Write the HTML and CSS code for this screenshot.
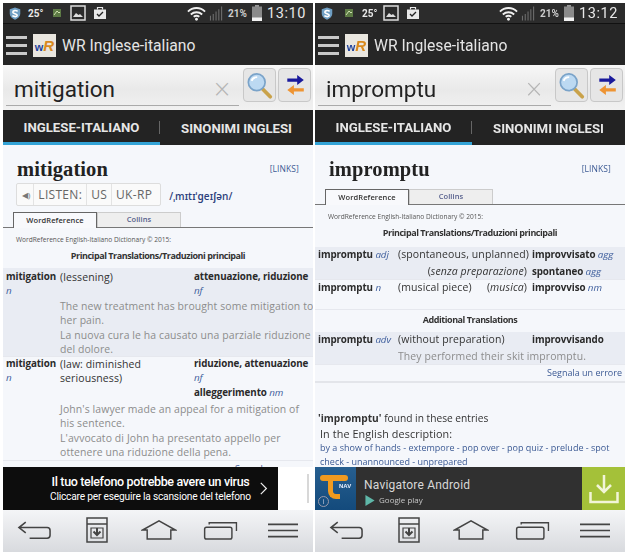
FILE: index.html
```html
<!DOCTYPE html>
<html lang="en">
<head>
    <meta charset="UTF-8">
    <meta name="viewport" content="width=device-width, initial-scale=1.0">
    <title>WR Inglese-italiano</title>
    <link rel="stylesheet" href="styles.css">
</head>
<body>
    <svg class="defs" width="0" height="0">
        <symbol id="i-shield" viewBox="0 0 16 16"><path d="M8 1l6 2v5c0 3.5-3 6-6 7-3-1-6-3.5-6-7V3z" fill="#6f9fc4"/><path d="M11 5.500C9 4 5.500 4.500 5.500 6.500S10.500 8 10.500 10 7 12 5 10.500" fill="none" stroke="#fff" stroke-width="1.8"/></symbol>
        <symbol id="i-photo" viewBox="0 0 16 16"><rect x="1" y="1" width="14" height="14" fill="#2b2b2b" stroke="#ddd" stroke-width="1.5"/><path d="M3 12l3-4 2.5 2 1.500-1 3 3z" fill="#ddd"/></symbol>
        <symbol id="i-bag" viewBox="0 0 14 14"><rect x="1" y="3.5" width="12" height="9.5" fill="#e8e8e8"/><path d="M4.5 3.5V1.500h5v2" fill="none" stroke="#e8e8e8" stroke-width="1.2"/><path d="M4 8l2 2 4-4" fill="none" stroke="#222" stroke-width="1.3"/></symbol>
        <symbol id="i-leaf" viewBox="0 0 10 10"><rect x="1" y="1" width="8" height="8" fill="#5d7a45"/><path d="M2 7l3-4 2 2 1-1" stroke="#cfe0b0" fill="none"/></symbol>
        <symbol id="i-wifi" viewBox="0 0 20 15"><g fill="none" stroke="#f0f0f0" stroke-width="2"><path d="M1 5.500c5-5 13-5 18 0"/><path d="M4 8.500c3.500-3 8.500-3 12 0"/><path d="M7 11c2-1.500 4-1.500 6 0"/></g><circle cx="10" cy="13.5" r="1.5" fill="#f0f0f0"/></symbol>
        <symbol id="i-signal" viewBox="0 0 16 16"><path d="M1 11h1v5H1zM4 9h1v7H4zM7 6.500h1V16H7zM10 4h1v12h-1zM13 1h1v15h-1z" fill="#777"/></symbol>
        <symbol id="i-batt" viewBox="0 0 10 16"><rect x="3" y="0" width="4" height="2" fill="#999"/><rect x="0" y="1.5" width="10" height="14.5" fill="#8a8a8a"/><rect x="0" y="12.5" width="10" height="3.5" fill="#f2f2f2"/></symbol>
        <symbol id="i-search" viewBox="0 0 30 30"><path d="M17 18l9 9" stroke="#c9a24a" stroke-width="4" stroke-linecap="round"/><circle cx="11.5" cy="11.5" r="9" fill="#bcd9f2" stroke="#7aa3c9" stroke-width="1.8"/><path d="M6 10c1-3 3-4 6-4" stroke="#fff" stroke-width="2" fill="none"/></symbol>
        <symbol id="i-swap" viewBox="0 0 20 20"><path d="M3 4h9V1l6 4.500-6 4.500V7H3z" fill="#1a1a9c"/><path d="M18 13H9v-3l-6 4.500L9 19v-3h9z" fill="#ee9433"/></symbol>
        <symbol id="i-back" viewBox="0 0 36 20"><path d="M9 2L2 7.500 9 13M2 7.500h29c2 0 3 1 3 3v5c0 2-1 3-3 3H13" fill="none" stroke="#444" stroke-width="1.6"/></symbol>
        <symbol id="i-save" viewBox="0 0 22 26"><path d="M1 1h20v24H1zM1 7h20" fill="none" stroke="#444" stroke-width="1.5"/><path d="M5 11h12v10H5z" fill="none" stroke="#444" stroke-width="1.2"/><path d="M11 11v7M7.500 14.500L11 18l3.500-3.500" fill="none" stroke="#444" stroke-width="2"/></symbol>
        <symbol id="i-home" viewBox="0 0 38 22"><path d="M1 11L19 1l18 10h-5v10H6V11z" fill="none" stroke="#444" stroke-width="1.6"/></symbol>
        <symbol id="i-recent" viewBox="0 0 38 22"><path d="M1 10c0-1 1-2 2-2h26c1 0 2 1 2 2v9c0 1-1 2-2 2H3c-1 0-2-1-2-2z" fill="none" stroke="#444" stroke-width="1.6"/><path d="M6 5V3h30v9" fill="none" stroke="#444" stroke-width="1.5"/></symbol>
        <symbol id="i-menu" viewBox="0 0 32 16"><path d="M0 1.500h32M0 8h32M0 14.500h32" stroke="#444" stroke-width="1.8"/></symbol>
    </svg>

    <main class="screens">
        <section class="phone">
            <div class="statusbar">
                <svg class="ic-shield"><use href="#i-shield"/></svg>
                <span class="temp">25°</span>
                <svg class="ic-leaf"><use href="#i-leaf"/></svg>
                <svg class="ic-photo"><use href="#i-photo"/></svg>
                <svg class="ic-bag"><use href="#i-bag"/></svg>
                <span class="spacer"></span>
                <svg class="ic-wifi"><use href="#i-wifi"/></svg>
                <svg class="ic-signal"><use href="#i-signal"/></svg>
                <span class="pct">21%</span>
                <svg class="ic-batt"><use href="#i-batt"/></svg>
                <span class="clock">13:10</span>
            </div>
            <div class="appbar">
                <div class="burger"><i></i><i></i><i></i></div>
                <div class="logo"><span class="logo-w">w</span><span class="logo-r">R</span></div>
                <span class="apptitle">WR Inglese-italiano</span>
            </div>
            <div class="searchbar">
                <div class="searchfield">
                    <span class="query">mitigation</span>
                    <span class="clear">×</span>
                </div>
                <button class="sbtn"><svg class="ic-search"><use href="#i-search"/></svg></button>
                <button class="sbtn"><svg class="ic-swap"><use href="#i-swap"/></svg></button>
            </div>
            <div class="tabs">
                <div class="tab active">INGLESE-ITALIANO</div>
                <div class="tab">SINONIMI INGLESI</div>
            </div>
            <div class="content">
                <div class="head">
                    <h1>mitigation</h1>
                    <a class="links">[LINKS]</a>
                </div>
                <div class="listen-row">
                    <div class="listen">
                        <span class="spk">◀︎)</span>
                        <span>LISTEN:</span>
                        <span>US</span>
                        <span>UK-RP</span>
                    </div>
                    <span class="ipa">/ˌmɪtɪˈɡeɪʃən/</span>
                </div>
                <div class="dict-tabs">
                    <span class="dtab on">WordReference</span>
                    <span class="dtab">Collins</span>
                </div>
                <p class="copy">WordReference English-Italiano Dictionary © 2015:</p>
                <h3 class="section">Principal Translations/Traduzioni principali</h3>
                <div class="entry shade">
                    <b>mitigation<br><em>n</em></b>
                    <span>(lessening)</span>
                    <b>attenuazione, riduzione<br><em>nf</em></b>
                    <p class="ex">The new treatment has brought some mitigation to<br>her pain.</p>
                    <p class="ex">La nuova cura le ha causato una parziale riduzione<br>del dolore.</p>
                </div>
                <div class="entry">
                    <b>mitigation<br><em>n</em></b>
                    <span>(law: diminished<br>seriousness)</span>
                    <b>riduzione, attenuazione<br><em>nf</em></b>
                    <b class="wide">alleggerimento <em>nm</em></b>
                    <p class="ex">John's lawyer made an appeal for a mitigation of<br>his sentence.</p>
                    <p class="ex">L'avvocato di John ha presentato appello per<br>ottenere una riduzione della pena.</p>
                </div>
                <div class="report">Segnala un errore</div>
            </div>
            <div class="ad ad-virus">
                <div class="virus">
                    <div class="virus-text">
                        <strong>Il tuo telefono potrebbe avere un virus</strong>
                        <small>Cliccare per eseguire la scansione del telefono</small>
                    </div>
                    <svg class="chev" viewBox="0 0 10 16"><path d="M1 1l7 7-7 7" fill="none" stroke="#eee" stroke-width="1.5"/></svg>
                </div>
                <div class="ad-gap"><i></i></div>
            </div>
            <div class="navbar">
                <svg class="n-back"><use href="#i-back"/></svg>
                <svg class="n-save"><use href="#i-save"/></svg>
                <svg class="n-home"><use href="#i-home"/></svg>
                <svg class="n-recent"><use href="#i-recent"/></svg>
                <svg class="n-menu"><use href="#i-menu"/></svg>
            </div>
        </section>

        <section class="phone">
            <div class="statusbar">
                <svg class="ic-shield"><use href="#i-shield"/></svg>
                <svg class="ic-leaf lead"><use href="#i-leaf"/></svg>
                <span class="temp alt">25°</span>
                <svg class="ic-photo"><use href="#i-photo"/></svg>
                <svg class="ic-bag"><use href="#i-bag"/></svg>
                <span class="spacer"></span>
                <svg class="ic-wifi"><use href="#i-wifi"/></svg>
                <svg class="ic-signal"><use href="#i-signal"/></svg>
                <span class="pct">21%</span>
                <svg class="ic-batt"><use href="#i-batt"/></svg>
                <span class="clock">13:12</span>
            </div>
            <div class="appbar">
                <div class="burger"><i></i><i></i><i></i></div>
                <div class="logo"><span class="logo-w">w</span><span class="logo-r">R</span></div>
                <span class="apptitle">WR Inglese-italiano</span>
            </div>
            <div class="searchbar">
                <div class="searchfield">
                    <span class="query">impromptu</span>
                    <span class="clear">×</span>
                </div>
                <button class="sbtn"><svg class="ic-search"><use href="#i-search"/></svg></button>
                <button class="sbtn"><svg class="ic-swap"><use href="#i-swap"/></svg></button>
            </div>
            <div class="tabs">
                <div class="tab active">INGLESE-ITALIANO</div>
                <div class="tab">SINONIMI INGLESI</div>
            </div>
            <div class="content">
                <div class="head">
                    <h1>impromptu</h1>
                    <a class="links">[LINKS]</a>
                </div>
                <div class="dict-tabs">
                    <span class="dtab on">WordReference</span>
                    <span class="dtab">Collins</span>
                </div>
                <p class="copy">WordReference English-Italiano Dictionary © 2015:</p>
                <h3 class="section roomy">Principal Translations/Traduzioni principali</h3>
                <div class="entry two shade">
                    <b>impromptu <em>adj</em></b>
                    <span>(spontaneous, unplanned)</span>
                    <b>improvvisato <em>agg</em></b>
                    <span class="second">(<i>senza preparazione</i>)</span>
                    <b>spontaneo <em>agg</em></b>
                </div>
                <div class="entry two tall">
                    <b>impromptu <em>n</em></b>
                    <span class="split"><span>(musical piece)</span><span>(<i>musica</i>)</span></span>
                    <b>improvviso <em>nm</em></b>
                </div>
                <h3 class="section add">Additional Translations</h3>
                <div class="entry two shade">
                    <b>impromptu <em>adv</em></b>
                    <span>(without preparation)</span>
                    <b>improvvisando</b>
                    <p class="ex">They performed their skit impromptu.</p>
                </div>
                <div class="report ruled">Segnala un errore</div>
                <p class="found"><b>'impromptu'</b> found in these entries</p>
                <p class="desc">In the English description:</p>
                <p class="refs"><a>by a show of hands</a> - <a>extempore</a> - <a>pop over</a> - <a>pop quiz</a> - <a>prelude</a> - <a>spot</a><br><a>check</a> - <a>unannounced</a> - <a>unprepared</a></p>
            </div>
            <div class="ad ad-nav">
                <div class="nav-icon">
                    <span class="nav-tag">NAV</span>
                    <span class="nav-info">i</span>
                </div>
                <div class="nav-text">
                    <span class="nav-name">Navigatore Android</span>
                    <span class="nav-play"><svg class="ic-play" viewBox="0 0 10 12"><path d="M0 0l10 6-10 6z" fill="#5fb7a8"/></svg>Google play</span>
                </div>
                <div class="nav-dl">
                    <svg viewBox="0 0 30 30"><path d="M15 1v17M8 11l7 7 7-7M1.500 18v10h27V18" fill="none" stroke="#f2f5d8" stroke-width="2.5"/></svg>
                </div>
            </div>
            <div class="navbar">
                <svg class="n-back"><use href="#i-back"/></svg>
                <svg class="n-save"><use href="#i-save"/></svg>
                <svg class="n-home"><use href="#i-home"/></svg>
                <svg class="n-recent"><use href="#i-recent"/></svg>
                <svg class="n-menu"><use href="#i-menu"/></svg>
            </div>
        </section>
    </main>
</body>
</html>
```

FILE: styles.css
```css
body {
    margin: 0;
    background: #fff;
    font-family: "Open Sans", "Noto Sans", sans-serif;
    overflow: hidden;
}

.defs {
    display: block;
    height: 0;
}

.screens {
    display: flex;
    gap: 2px;
    padding: 3px 0 0 3px;
    filter: blur(0.3px);
}

.phone {
    width: 310px;
    height: 549px;
    display: flex;
    flex-direction: column;
    background: #f5f7fb;
    overflow: hidden;
}

/* status bar */
.statusbar {
    height: 20px;
    flex: none;
    display: flex;
    align-items: center;
    padding: 0 7px 0 5px;
    background: #2c2c2c;
    color: #e8e8e8;
    font-family: "Roboto", sans-serif;
}

.spacer { flex: 1; }
.temp { font-size: 10px; font-weight: 700; margin: 0 9px 0 6px; }
.temp.alt { margin: 0 6px 0 0; }
.pct { font-size: 10px; font-weight: 700; margin: 0 5px 0 4px; color: #ccc; }
.clock { font-size: 14.5px; letter-spacing: 0.6px; margin-left: 5px; }
.ic-shield { width: 14px; height: 15px; }
.ic-leaf { width: 10px; height: 10px; margin-right: 8px; }
.ic-leaf.lead { margin-left: 10px; }
.ic-photo { width: 16px; height: 16px; margin-right: 7px; }
.ic-bag { width: 14px; height: 14px; }
.ic-wifi { width: 19px; height: 15px; }
.ic-signal { width: 15px; height: 16px; margin-left: 3px; }
.ic-batt { width: 10px; height: 16px; }

/* app bar */
.appbar {
    height: 42px;
    flex: none;
    display: flex;
    align-items: center;
    padding: 2px 3px 0;
    background: #262626;
    border-top: 1px solid #111;
    box-sizing: border-box;
}

.burger {
    width: 21px;
    display: flex;
    flex-direction: column;
    gap: 5px;
    margin-right: 6px;
}

.burger i {
    display: block;
    height: 3px;
    background: #c9c9c9;
}

.logo {
    width: 23px;
    height: 23px;
    display: flex;
    align-items: center;
    justify-content: center;
    background: #e9e6df;
    font-family: "Liberation Sans", sans-serif;
    font-weight: 700;
    margin-right: 6px;
}

.logo-w { color: #1d3f9a; font-size: 11px; margin-top: 2px; }
.logo-r { color: #d98a1e; font-size: 15px; font-style: italic; }

.apptitle {
    color: #e4e4e4;
    font-family: "Roboto", sans-serif;
    font-size: 15.7px;
}

/* search */
.searchbar {
    height: 45px;
    flex: none;
    display: flex;
    align-items: flex-start;
    gap: 2px;
    padding: 3px 2px 0 3px;
    box-sizing: border-box;
    background: linear-gradient(#f7f7f7, #e9e9e9 55%, #f1f1f1);
}

.searchfield {
    flex: 1;
    height: 38px;
    display: flex;
    align-items: center;
    justify-content: space-between;
    padding: 5px 7px 0 8px;
    margin-right: 2px;
    border-bottom: 1.5px solid #aaa;
    box-sizing: border-box;
}

.query {
    font-family: "Roboto", sans-serif;
    font-size: 22.5px;
    color: #222;
}

.clear {
    font-family: "DejaVu Sans", sans-serif;
    font-size: 24px;
    font-weight: 300;
    color: #b5b5b5;
}

.sbtn {
    width: 33px;
    height: 34px;
    padding: 0;
    display: flex;
    align-items: center;
    justify-content: center;
    background: #e6e6e6;
    border: 1px solid #c8c8c8;
    border-radius: 4px;
}

.ic-search { width: 28px; height: 29px; }
.ic-swap { width: 22px; height: 22px; }

/* tabs */
.tabs {
    height: 35px;
    flex: none;
    display: flex;
    background: #232323;
    box-sizing: border-box;
}

.tab {
    flex: 1;
    position: relative;
    display: flex;
    align-items: center;
    justify-content: center;
    color: #e6e6e6;
    font-family: "Roboto", sans-serif;
    font-weight: 700;
    font-size: 13.2px;
    box-sizing: border-box;
    padding-top: 2px;
}

.tab.active {
    flex: none;
    width: 157px;
    padding-top: 3px;
    border-bottom: 3px solid #33a3d6;
}

.tab.active::after {
    content: "";
    position: absolute;
    right: 0;
    top: 11px;
    width: 1px;
    height: 13px;
    background: #666;
}

/* page content */
.content {
    flex: 1;
    min-height: 0;
    overflow: hidden;
    font-size: 10.5px;
    line-height: 14px;
    color: #333;
    letter-spacing: 0.1px;
}

.head {
    display: flex;
    justify-content: space-between;
    padding: 11px 14px 0 14px;
    height: 27px;
}

h1 {
    margin: 0;
    font-family: "Liberation Serif", serif;
    font-size: 20.5px;
    line-height: 26px;
    color: #222;
}

.links {
    font-size: 8.5px;
    color: #3c5a94;
    line-height: 26px;
}

.listen-row {
    display: flex;
    align-items: flex-start;
    gap: 8px;
    padding-left: 13px;
    height: 23px;
}

.listen {
    display: flex;
    height: 21px;
    align-items: center;
    border: 1px solid #ddd;
    border-radius: 2px;
    font-size: 12px;
    letter-spacing: 0.3px;
    color: #666;
    background: #fafafa;
}

.listen span {
    padding: 0 4px;
    line-height: 21px;
    border-right: 1px solid #e3e3e3;
}

.listen span:last-child { border-right: none; padding-right: 8px; }
.listen .spk { font-size: 8px; color: #777; padding: 0 3px 0 5px; letter-spacing: 0; }

.ipa {
    font-size: 10px;
    font-weight: 600;
    color: #2d3f7c;
    line-height: 26px;
}

.dict-tabs {
    display: flex;
    height: 16px;
    box-sizing: border-box;
    margin-top: 6px;
    padding-left: 10px;
    border-bottom: 1px solid #777;
    align-items: flex-start;
}

.dtab {
    width: 84px;
    height: 15px;
    box-sizing: border-box;
    text-align: center;
    font-size: 7.5px;
    line-height: 13px;
    font-weight: 600;
    color: #555e8c;
    background: #eeeeee;
    border: 1px solid #ccc;
    border-bottom: none;
}

.dtab.on {
    height: 16px;
    color: #333;
    background: #f8f9fc;
    border: 1px solid #666;
    border-bottom: none;
    line-height: 15px;
}

.copy {
    margin: 6px 0 0 13px;
    font-size: 6.6px;
    line-height: 11px;
    color: #555;
    letter-spacing: 0;
}

.section {
    margin: 3px 0 0;
    text-align: center;
    font-size: 9px;
    line-height: 15px;
    height: 20px;
    font-weight: 700;
    color: #333;
    letter-spacing: -0.45px;
}

.section.roomy { height: 22px; }
.section.add { margin: 0; height: 22px; line-height: 20px; }

.entry {
    display: grid;
    grid-template-columns: 54px 134px 1fr;
    padding: 0 0 1px 3px;
    border-bottom: 1px solid #e6e8ee;
    white-space: nowrap;
}

.entry.shade { background: #e9ecf3; padding: 2px 0 0 3px; }
.entry b { font-weight: 700; font-size: 9.8px; color: #2a2a2a; letter-spacing: -0.1px; }
.entry em { color: #3d5d9c; font-weight: 400; }
.entry .wide { grid-column: 3; padding: 1px 0; }

.ex {
    grid-column: 2 / 4;
    margin: 1px 0 0;
    color: #8c8c8c;
    font-size: 10.45px;
}

.entry.two,
.entry.two.shade {
    grid-template-columns: 80px 134px 1fr;
    line-height: 15px;
    row-gap: 2px;
    padding: 0 0 0 3px;
}

.entry.two.tall { height: 30px; box-sizing: border-box; }
.entry.two .second { grid-column: 1 / 3; text-align: right; padding-right: 5px; }
.entry .split { display: flex; justify-content: space-between; padding-right: 5px; }
.entry.two .ex { margin: 0; }

.report {
    text-align: right;
    padding-right: 3px;
    font-size: 9px;
    color: #3c5a94;
    letter-spacing: 0;
    height: 15px;
    line-height: 15px;
}

.report.ruled {
    border-bottom: 2px solid #e3e5ea;
    padding-bottom: 1px;
}

.found { margin: 27px 0 0 3px; font-size: 10.2px; letter-spacing: 0; line-height: 17px; }
.desc { margin: 0 0 0 5px; font-size: 10.8px; line-height: 14px; }
.refs { margin: 0 0 0 5px; font-size: 9px; line-height: 14px; color: #3c5a94; letter-spacing: 0; }

/* ads */
.ad {
    height: 43px;
    flex: none;
    display: flex;
}

.ad-virus { background: #fff; }

.virus {
    width: 275px;
    display: flex;
    align-items: center;
    gap: 9px;
    padding-left: 47px;
    box-sizing: border-box;
    background: #0d0d0d;
    color: #fff;
    font-family: "Roboto", sans-serif;
}

.virus-text {
    display: flex;
    flex-direction: column;
    align-items: center;
}

.virus-text strong {
    font-size: 12.5px;
    line-height: 16px;
    font-weight: 500;
    letter-spacing: -0.35px;
    white-space: nowrap;
}

.virus-text small {
    font-size: 10.2px;
    line-height: 14px;
    letter-spacing: -0.2px;
    white-space: nowrap;
}

.chev { width: 8px; height: 13px; flex: none; }

.ad-gap {
    flex: 1;
    display: flex;
    justify-content: flex-end;
    padding: 7px 4px 7px 0;
}

.ad-gap i {
    width: 2px;
    background: #d8d8d8;
}

.ad-nav { background: #303030; }

.nav-icon {
    width: 41px;
    position: relative;
    background: linear-gradient(#275f8f, #134a7c);
}

.nav-tag {
    position: absolute;
    left: 24px;
    top: 16px;
    font-size: 6px;
    font-weight: 700;
    color: #e8f0ff;
    font-family: "Liberation Sans", sans-serif;
}

.nav-icon::before {
    content: "";
    position: absolute;
    left: 5px;
    top: 8px;
    width: 28px;
    height: 6px;
    background: #f09a1f;
    border-radius: 3px;
}

.nav-icon::after {
    content: "";
    position: absolute;
    left: 13px;
    top: 13px;
    width: 12px;
    height: 19px;
    border-left: 5px solid #f09a1f;
    border-bottom: 5px solid #f09a1f;
    border-radius: 0 0 0 8px;
    box-sizing: border-box;
}

.nav-info {
    position: absolute;
    left: 3px;
    bottom: 3px;
    width: 11px;
    height: 11px;
    line-height: 10px;
    text-align: center;
    border: 1px solid #99a;
    border-radius: 50%;
    box-sizing: border-box;
    font-size: 7px;
    color: #ccd;
}

.nav-text {
    flex: 1;
    display: flex;
    flex-direction: column;
    padding: 10px 0 0 8px;
    color: #d8d8d8;
}

.nav-name {
    font-family: "Roboto", sans-serif;
    font-size: 12px;
    line-height: 16px;
    letter-spacing: 0.2px;
}

.nav-play {
    display: flex;
    align-items: center;
    gap: 4px;
    font-size: 8px;
    line-height: 14px;
    color: #c8c8c8;
}

.ic-play { width: 10px; height: 11px; margin-left: 1px; }

.nav-dl {
    width: 43px;
    display: flex;
    align-items: center;
    justify-content: center;
    background: #a4c139;
}

.nav-dl svg { width: 30px; height: 30px; }

/* bottom nav */
.navbar {
    height: 42px;
    flex: none;
    display: flex;
    align-items: center;
    padding: 0 0 2px 14px;
    box-sizing: border-box;
    background: linear-gradient(#f4f5f7, #d8dade);
}

.n-back { width: 35px; height: 20px; margin-right: 34px; }
.n-save { width: 22px; height: 26px; margin-right: 33px; }
.n-home { width: 36px; height: 20px; margin-right: 26px; }
.n-recent { width: 36px; height: 20px; margin-right: 28px; }
.n-menu { width: 32px; height: 15px; }
```
